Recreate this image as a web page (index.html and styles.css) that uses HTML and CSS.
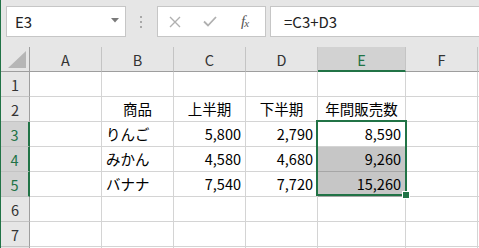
FILE: index.html
```html
<!DOCTYPE html>
<html lang="ja">
<head>
    <meta charset="UTF-8">
    <title>Excel</title>
    <link rel="stylesheet" href="styles.css">
</head>
<body>
    <div class="window">
        <div class="formula-bar">
            <div class="name-box">
                <span>E3</span>
                <svg class="arrow" width="8" height="5" viewBox="0 0 8 5"><path d="M0 0 H8 L4 4.5 Z" fill="#7a7a7a"/></svg>
            </div>
            <div class="grip">
                <svg width="3" height="12" viewBox="0 0 3 12"><rect x="0" y="0" width="2" height="2" fill="#a8a8a8"/><rect x="0" y="5" width="2" height="2" fill="#a8a8a8"/><rect x="0" y="10" width="2" height="2" fill="#a8a8a8"/></svg>
            </div>
            <div class="fx-box">
                <svg class="btn" width="12" height="12" viewBox="0 0 12 12"><path d="M1 1 L11 11 M11 1 L1 11" stroke="#b0b0b0" stroke-width="1.4" fill="none"/></svg>
                <svg class="btn" width="14" height="11" viewBox="0 0 14 11"><path d="M1 5.5 L5 9.5 L13 1" stroke="#b0b0b0" stroke-width="1.8" fill="none"/></svg>
                <span class="fx">f<sub>x</sub></span>
            </div>
            <div class="formula">=C3+D3</div>
        </div>

        <div class="sheet">
            <div class="hd corner"><svg width="18" height="17" viewBox="0 0 18 17"><path d="M18 0 V17 H0 Z" fill="#b6b6b6"/></svg></div>
            <div class="hd">A</div>
            <div class="hd">B</div>
            <div class="hd">C</div>
            <div class="hd">D</div>
            <div class="hd on">E</div>
            <div class="hd">F</div>
            <div class="hd"></div>

            <div class="rh">1</div>
            <div class="c"></div><div class="c"></div><div class="c"></div><div class="c"></div><div class="c"></div><div class="c"></div><div class="c"></div>

            <div class="rh">2</div>
            <div class="c"></div>
            <div class="c ctr">商品</div>
            <div class="c ctr">上半期</div>
            <div class="c ctr">下半期</div>
            <div class="c ctr">年間販売数</div>
            <div class="c"></div><div class="c"></div>

            <div class="rh on">3</div>
            <div class="c"></div>
            <div class="c">りんご</div>
            <div class="c num">5,800</div>
            <div class="c num">2,790</div>
            <div class="c num">8,590</div>
            <div class="c"></div><div class="c"></div>

            <div class="rh on">4</div>
            <div class="c"></div>
            <div class="c">みかん</div>
            <div class="c num">4,580</div>
            <div class="c num">4,680</div>
            <div class="c num sel">9,260</div>
            <div class="c"></div><div class="c"></div>

            <div class="rh on">5</div>
            <div class="c"></div>
            <div class="c">バナナ</div>
            <div class="c num">7,540</div>
            <div class="c num">7,720</div>
            <div class="c num sel">15,260</div>
            <div class="c"></div><div class="c"></div>

            <div class="rh">6</div>
            <div class="c"></div><div class="c"></div><div class="c"></div><div class="c"></div><div class="c"></div><div class="c"></div><div class="c"></div>

            <div class="rh">7</div>
            <div class="c"></div><div class="c"></div><div class="c"></div><div class="c"></div><div class="c"></div><div class="c"></div><div class="c"></div>

            <div class="rh"></div>
            <div class="c"></div><div class="c"></div><div class="c"></div><div class="c"></div><div class="c"></div><div class="c"></div><div class="c"></div>
        </div>

        <div class="selection"><span class="handle"></span></div>
    </div>
</body>
</html>
```

FILE: styles.css
```css
* {
    margin: 0;
    padding: 0;
    box-sizing: border-box;
}

body {
    width: 479px;
    height: 248px;
    overflow: hidden;
    background: #e6e6e6;
    font-family: 'Noto Sans CJK JP', 'Noto Sans', sans-serif;
    color: #000;
}

.window {
    position: relative;
    width: 479px;
    height: 248px;
    overflow: hidden;
    border-left: 1px solid #217346;
}

/* Строка формул */
.formula-bar {
    display: flex;
    align-items: flex-start;
    height: 47px;
    padding: 6px 0 0 5px;
}

.name-box {
    display: flex;
    align-items: center;
    justify-content: space-between;
    width: 120px;
    height: 31px;
    padding: 0 6px 0 8px;
    background: #fff;
    border: 1px solid #c6c6c6;
    font-size: 15px;
    color: #222;
}

.name-box .arrow {
    margin-top: -2px;
}

.grip {
    display: flex;
    align-items: center;
    justify-content: center;
    width: 31px;
    height: 31px;
    padding-top: 1px;
}

.fx-box {
    display: flex;
    align-items: center;
    width: 109px;
    height: 31px;
    padding-left: 11px;
    background: #fff;
    border: 1px solid #c6c6c6;
}

.fx-box .btn {
    margin-right: 22px;
}

.fx-box .btn + .btn {
    margin-right: 24px;
}

.fx {
    font-family: 'Liberation Serif', serif;
    font-style: italic;
    font-size: 15px;
    color: #555;
    letter-spacing: -1px;
}

.fx sub {
    font-size: 11px;
    vertical-align: -1px;
}

.formula {
    display: flex;
    align-items: center;
    flex: 1;
    height: 31px;
    margin-left: 4px;
    padding-left: 13px;
    background: #fff;
    border: 1px solid #c6c6c6;
    border-right: none;
    font-size: 15px;
    color: #222;
}

/* Сетка листа */
.sheet {
    display: grid;
    grid-template-columns: 29px 72px 72px 72px 72px 88px 72px 72px;
    grid-template-rows: 25px repeat(8, 25px);
    font-size: 14.5px;
}

.hd {
    display: flex;
    align-items: center;
    justify-content: center;
    background: #e6e6e6;
    border-right: 1px solid #c4c4c4;
    border-bottom: 1px solid #9e9e9e;
    color: #333;
    padding-top: 1px;
}

.hd.corner {
    align-items: flex-end;
    justify-content: flex-end;
    padding: 0 3px 3px 0;
    border-right-color: #9e9e9e;
}

.hd.on {
    background: #d2d2d2;
    color: #217346;
    border-bottom: 2px solid #217346;
}

.rh {
    display: flex;
    align-items: center;
    justify-content: center;
    background: #e6e6e6;
    border-right: 1px solid #9e9e9e;
    border-bottom: 1px solid #c4c4c4;
    color: #333;
}

.rh.on {
    background: #d2d2d2;
    color: #217346;
    border-right: 2px solid #217346;
}

.c {
    display: flex;
    align-items: flex-end;
    padding: 0 4px 2px;
    background: #fff;
    border-right: 1px solid #d4d4d4;
    border-bottom: 1px solid #d4d4d4;
    white-space: nowrap;
    line-height: 20px;
}

.ctr {
    justify-content: center;
}

.num {
    justify-content: flex-end;
}

.sel {
    background: #c6c6c6;
    border-bottom-color: #a6a6a6;
}

/* Рамка выделения */
.selection {
    position: absolute;
    left: 315px;
    top: 120px;
    width: 91px;
    height: 76px;
    border: 2px solid #217346;
}

.handle {
    position: absolute;
    right: -5px;
    bottom: -5px;
    width: 8px;
    height: 8px;
    background: #217346;
    border: 1px solid #fff;
}
```
